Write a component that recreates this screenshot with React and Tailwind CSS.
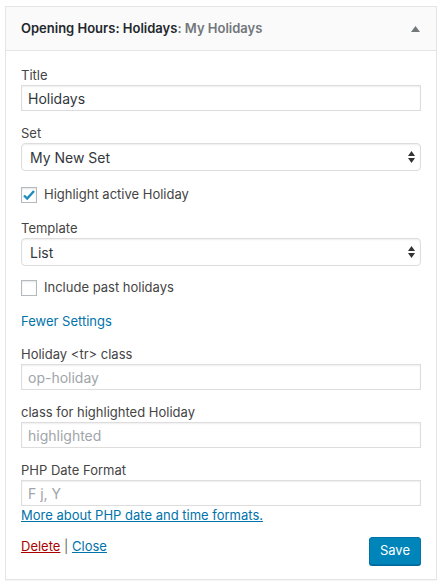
import React, { useState } from 'react';

const font = { fontFamily: 'Inter, "Liberation Sans", Arial, sans-serif' };

const Label = ({ children }) => (
    <div className="text-[13px] leading-[18px] text-[#444]">{children}</div>
);

const TextField = ({ value, placeholder }) => (
    <input
        type="text"
        defaultValue={value}
        placeholder={placeholder}
        className="block w-full h-[26px] mt-[1px] px-[6px] text-[14px] text-[#32373c] placeholder:text-[#a0a5aa] bg-white border border-[#ddd] shadow-[inset_0_1px_2px_rgba(0,0,0,0.07)] outline-none"
        style={font}
    />
);

const Select = ({ value }) => (
    <div className="relative mt-[1px] h-[28px] w-full rounded-[4px] border border-[#ddd] bg-white shadow-[inset_0_1px_2px_rgba(0,0,0,0.07)] flex items-center px-[8px] text-[14px] text-[#32373c]">
        <span>{value}</span>
        <svg className="absolute right-[5px] top-[7px]" width="7" height="12" viewBox="0 0 7 12">
            <path d="M3.5 0 L7 5 L0 5 Z" fill="#333" />
            <path d="M0 7 L7 7 L3.5 12 Z" fill="#333" />
        </svg>
    </div>
);

const Checkbox = ({ checked, label }) => (
    <div className="flex items-center gap-[7px] h-[16px]">
        <div className="w-[16px] h-[16px] border border-[#b4b9be] bg-white shadow-[inset_0_1px_2px_rgba(0,0,0,0.1)] flex items-center justify-center">
            {checked && (
                <svg width="14" height="14" viewBox="0 0 14 14">
                    <path d="M2 7.5 L5.2 10.6 L12 3" fill="none" stroke="#1e8cbe" strokeWidth="2.4" />
                </svg>
            )}
        </div>
        <span className="text-[13px] text-[#444]">{label}</span>
    </div>
);

export default function App() {
    const [open] = useState(true);

    return (
        <div className="w-[441px] h-[584px] bg-white pt-[6px] pl-[5px]" style={font}>
            <div className="w-[432px] border border-[#e5e5e5] shadow-[0_1px_1px_rgba(0,0,0,0.04)] bg-white">
                <div className="h-[44px] bg-[#fafafa] border-b border-[#e5e5e5] flex items-center justify-between pl-[15px] pr-[16px]">
                    <h3 className="text-[13px] font-semibold text-[#23282d]">
                        Opening Hours: Holidays<span className="text-[#72777c]">: My Holidays</span>
                    </h3>
                    <svg width="9" height="6" viewBox="0 0 9 6">
                        <path d="M4.5 0 L9 6 L0 6 Z" fill="#72777c" />
                    </svg>
                </div>
                {open && (
                    <div className="px-[15px] pt-[15px] pb-[14px]">
                        <Label>Title</Label>
                        <TextField value="Holidays" />

                        <div className="mt-[13px]">
                            <Label>Set</Label>
                            <Select value="My New Set" />
                        </div>

                        <div className="mt-[16px]">
                            <Checkbox checked label="Highlight active Holiday" />
                        </div>

                        <div className="mt-[16px]">
                            <Label>Template</Label>
                            <Select value="List" />
                        </div>

                        <div className="mt-[14px]">
                            <Checkbox label="Include past holidays" />
                        </div>

                        <div className="mt-[15px] leading-[18px]">
                            <a href="#" className="text-[13px] text-[#0073aa]">Fewer Settings</a>
                        </div>

                        <div className="mt-[15px]">
                            <Label>Holiday &lt;tr&gt; class</Label>
                            <TextField placeholder="op-holiday" />
                        </div>

                        <div className="mt-[13px]">
                            <Label>class for highlighted Holiday</Label>
                            <TextField placeholder="highlighted" />
                        </div>

                        <div className="mt-[13px]">
                            <Label>PHP Date Format</Label>
                            <TextField placeholder="F j, Y" />
                            <a href="#" className="block text-[13px] leading-[18px] text-[#0073aa] underline">
                                More about PHP date and time formats.
                            </a>
                        </div>

                        <div className="mt-[13px] flex items-start justify-between">
                            <div className="text-[13px] leading-[18px] text-[#666]">
                                <a href="#" className="text-[#a00] underline">Delete</a>
                                <span> | </span>
                                <a href="#" className="text-[#0073aa] underline">Close</a>
                            </div>
                            <button className="h-[28px] px-[10px] text-[13px] text-white bg-[#0085ba] border border-[#0073aa] rounded-[3px] shadow-[0_1px_0_#006799]">
                                Save
                            </button>
                        </div>
                    </div>
                )}
            </div>
        </div>
    );
}
